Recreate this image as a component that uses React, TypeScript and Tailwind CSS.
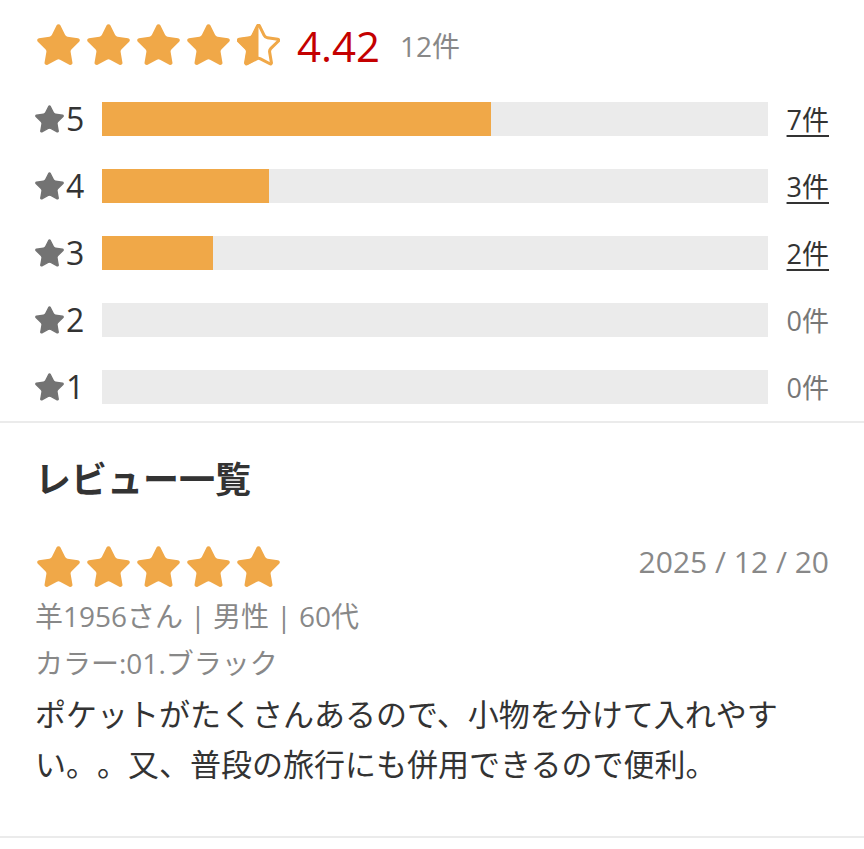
import React from 'react';

const STAR_PATH =
  'M11.525 2.295a.53.53 0 0 1 .95 0l2.31 4.679a2.123 2.123 0 0 0 1.595 1.16l5.166.756a.53.53 0 0 1 .294.904l-3.736 3.638a2.123 2.123 0 0 0-.611 1.878l.882 5.14a.53.53 0 0 1-.771.56l-4.618-2.428a2.122 2.122 0 0 0-1.973 0L6.396 21.01a.53.53 0 0 1-.77-.56l.881-5.139a2.122 2.122 0 0 0-.611-1.879L2.16 9.795a.53.53 0 0 1 .294-.906l5.165-.755a2.122 2.122 0 0 0 1.597-1.16z';

const Star = ({ size, color, half = false }: { size: number; color: string; half?: boolean }) => (
  <svg width={size} height={size} viewBox="1.4 1.4 21.2 21.2" className="shrink-0">
    {half ? (
      <>
        <defs>
          <clipPath id="left-half">
            <rect x="0" y="0" width="12" height="24" />
          </clipPath>
        </defs>
        <path d={STAR_PATH} fill={color} stroke={color} strokeWidth="1" strokeLinejoin="round" clipPath="url(#left-half)" />
        <path d={STAR_PATH} fill="none" stroke={color} strokeWidth="1.5" strokeLinejoin="round" />
      </>
    ) : (
      <path d={STAR_PATH} fill={color} stroke={color} strokeWidth="1" strokeLinejoin="round" />
    )}
  </svg>
);

const ORANGE = '#f0a848';

const breakdown = [
  { stars: 5, count: 7 },
  { stars: 4, count: 3 },
  { stars: 3, count: 2 },
  { stars: 2, count: 0 },
  { stars: 1, count: 0 },
];
const total = 12;

const App: React.FC = () => {
  return (
    <div className="w-[864px] min-h-[849px] bg-white font-['Open_Sans','Noto_Sans_CJK_JP',sans-serif] text-[#333]">
      {/* Summary */}
      <section className="px-[35px] pt-[24px] pb-[17px]">
        <div className="flex items-center h-[43px] ml-[2px]">
          <div className="flex gap-[7px]">
            {[0, 1, 2, 3].map(i => (
              <Star key={i} size={43} color={ORANGE} />
            ))}
            <Star size={43} color={ORANGE} half />
          </div>
          <span className="ml-[17px] text-[42px] leading-none text-[#c40000]">4.42</span>
          <span className="ml-[20px] text-[28px] leading-none text-[#888]">{total}件</span>
        </div>

        <div className="mt-[35px] flex flex-col gap-[33px]">
          {breakdown.map(row => (
            <div key={row.stars} className="flex items-center h-[34px]">
              <div className="w-[67px] flex items-center">
                <Star size={29} color="#737373" />
                <span className="ml-[2px] text-[32px] leading-none text-[#333]">{row.stars}</span>
              </div>
              <div className="flex-1 h-[34px] bg-[#ebebeb]">
                <div className="h-full bg-[#f0a848]" style={{ width: `${(row.count / total) * 100}%` }} />
              </div>
              <div className="w-[61px] text-right text-[27px] leading-none">
                {row.count > 0 ? (
                  <a href="#" className="text-[#333] underline underline-offset-[5px] decoration-[2px]">
                    {row.count}件
                  </a>
                ) : (
                  <span className="text-[#777]">{row.count}件</span>
                )}
              </div>
            </div>
          ))}
        </div>
      </section>

      <div className="h-[2px] bg-[#ebebeb]" />

      {/* Review list */}
      <section className="px-[35px] pt-[32px] pb-[47px]">
        <h2 className="text-[36px] leading-[50px] font-bold text-[#333]">レビュー一覧</h2>

        <div className="mt-[41px] flex items-center justify-between h-[43px]">
          <div className="flex gap-[7px] ml-[2px]">
            {[0, 1, 2, 3, 4].map(i => (
              <Star key={i} size={43} color={ORANGE} />
            ))}
          </div>
          <span className="text-[30px] leading-none text-[#888] -mt-[12px]">2025 / 12 / 20</span>
        </div>

        <p className="mt-[4px] text-[28px] leading-[47px] text-[#888]">羊1956さん | 男性 | 60代</p>
        <p className="text-[28px] leading-[47px] text-[#888]">カラー:01.ブラック</p>
        <p className="mt-[2px] text-[31px] leading-[50px] text-[#333] [text-spacing-trim:space-all]">
          ポケットがたくさんあるので、小物を分けて入れやすい。。又、普段の旅行にも併用できるので便利。
        </p>
      </section>

      <div className="h-[2px] bg-[#ebebeb]" />
    </div>
  );
};

export default App;
